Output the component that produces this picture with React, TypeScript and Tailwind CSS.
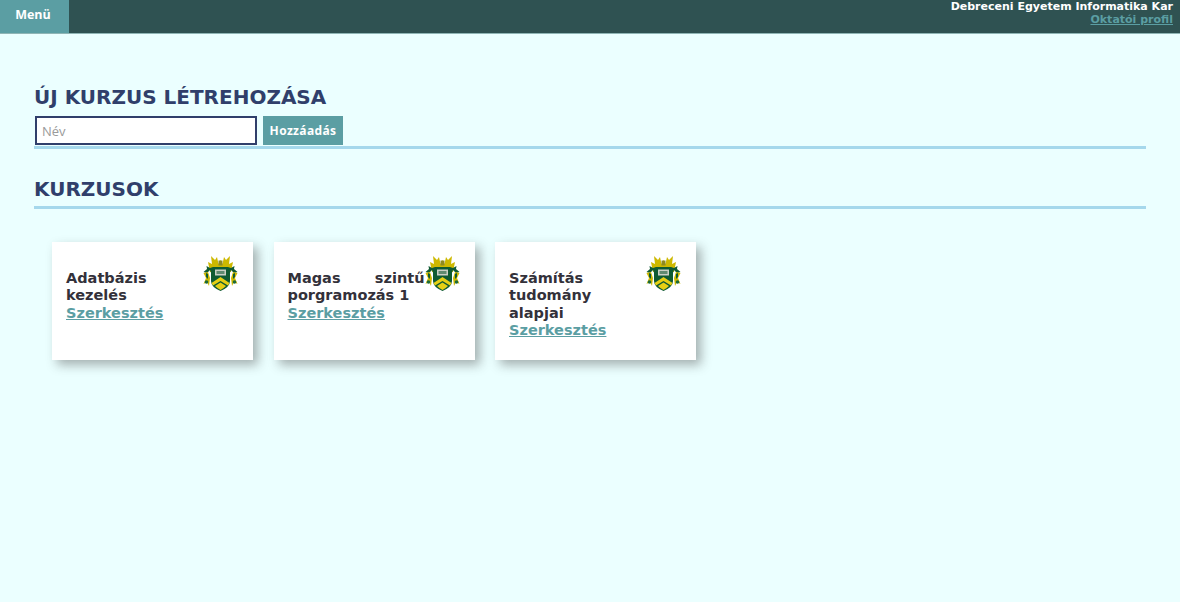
const dejavu = "font-['DejaVu_Sans',sans-serif]";

function Crest() {
  return (
    <svg viewBox="0 0 35 35" className="w-[35px] h-[35px] shrink-0">
      <path d="M7 16 L5 6 L9 8 L8 0 L12 4 L14 1 L15.5 8 L17.5 4 L19.5 8 L21 1 L23 4 L27 0 L26 8 L30 6 L28 16 L17.5 18 Z" fill="#cdb800" />
      <path d="M15.5 4.5 h4 v5 h-4 Z" fill="#8f8a20" />
      <path d="M0.5 16 L4 13 L3.5 10 L7 12 L10 11 L25 11 L28 12 L31.5 10 L31 13 L34.5 16 L31 17 L28 14 L26 19 L9 19 L7 14 L4 17 Z" fill="#0f5a32" />
      <path d="M0.5 17 L5 16 L7 22 L6 30 L4 26 L0.5 28 L3 22 Z" fill="#cdb800" />
      <path d="M34.5 17 L30 16 L28 22 L29 30 L31 26 L34.5 28 L32 22 Z" fill="#cdb800" />
      <path d="M3 17 L5 18 L5 23 L3 21 Z" fill="#0f5a32" />
      <path d="M32 17 L30 18 L30 23 L32 21 Z" fill="#0f5a32" />
      <circle cx="3.5" cy="26" r="1.8" fill="#1b6a3a" />
      <circle cx="31.5" cy="26" r="1.8" fill="#1b6a3a" />
      <path d="M8 13 H27 V25 Q27 31 17.5 35 Q8 31 8 25 Z" fill="#0f5a32" />
      <path d="M12 13.5 H23 V19.5 H12 Z" fill="#c9cfc4" />
      <path d="M13.5 15 h8 v3 h-8 Z" fill="#5f8a70" />
      <path d="M8.5 27 L17.5 21 L26.5 27 L25 29.5 L17.5 25 L10 29.5 Z" fill="#e6cf14" />
      <path d="M12 30 L17.5 26.5 L23 30 Q20.5 32.5 17.5 34 Q14.5 32.5 12 30 Z" fill="#e6cf14" />
    </svg>
  );
}

function Course({ title }: { title: string }) {
  return (
    <div className="w-[201px] h-[118px] bg-white pl-[14px] pr-[15px] pt-[14px] flex shadow-[5px_5px_10px_rgba(60,60,60,0.4)]">
      <div className="flex-1 pt-[14px] text-[14.5px] leading-[17.3px] font-bold text-[#33313a] text-justify">
        {title}
        <br />
        <a className="text-[#5b9ea3] underline">Szerkesztés</a>
      </div>
      <Crest />
    </div>
  );
}

export default function App() {
  return (
    <div className={`min-h-[602px] bg-[#ebffff] ${dejavu}`}>
      <header className="h-[34px] bg-[#2f5252] border-b border-b-[#8fb5b5] flex justify-between">
        <div className="w-[69px] h-[33px] bg-[#5b9ea3] flex items-center justify-center pb-[2px] pr-[3px] text-white font-bold text-[12.5px] font-['Open_Sans',sans-serif]">
          Menü
        </div>
        <div className="pr-[7px] text-right text-[11px] leading-[13px] font-bold">
          <div className="text-white">Debreceni Egyetem Informatika Kar</div>
          <a className="text-[#5b9ea3] underline">Oktatói profil</a>
        </div>
      </header>

      <main className="px-[34px] pt-[50px]">
        <h2 className="text-[20px] leading-[26px] font-bold text-[#303f6b]">ÚJ KURZUS LÉTREHOZÁSA</h2>
        <div className="flex items-stretch gap-[6px] h-[29px] mt-[6px] pl-[1px]">
          <input
            placeholder="Név"
            className="w-[222px] h-[29px] bg-white border-2 border-[#303f6b] px-[5px] text-[13px] font-['Open_Sans',sans-serif] placeholder:text-[#9a9a9a] outline-none"
          />
          <button className="w-[80px] h-[29px] bg-[#5b9ea3] text-white font-bold text-[12px] font-['Open_Sans',sans-serif] tracking-[0.35px]">
            Hozzáadás
          </button>
        </div>
        <div className="h-[3px] mt-[1px] bg-[#a5d8ec]" />

        <h2 className="mt-[27px] text-[20px] leading-[26px] font-bold text-[#303f6b]">KURZUSOK</h2>
        <div className="h-[3px] mt-[4px] bg-[#a5d8ec]" />

        <div className="mt-[33px] ml-[18px] flex gap-[20.5px]">
          <Course title="Adatbázis kezelés" />
          <Course title="Magas szintű porgramozás 1" />
          <Course title="Számítás tudomány alapjai" />
        </div>
      </main>
    </div>
  );
}
